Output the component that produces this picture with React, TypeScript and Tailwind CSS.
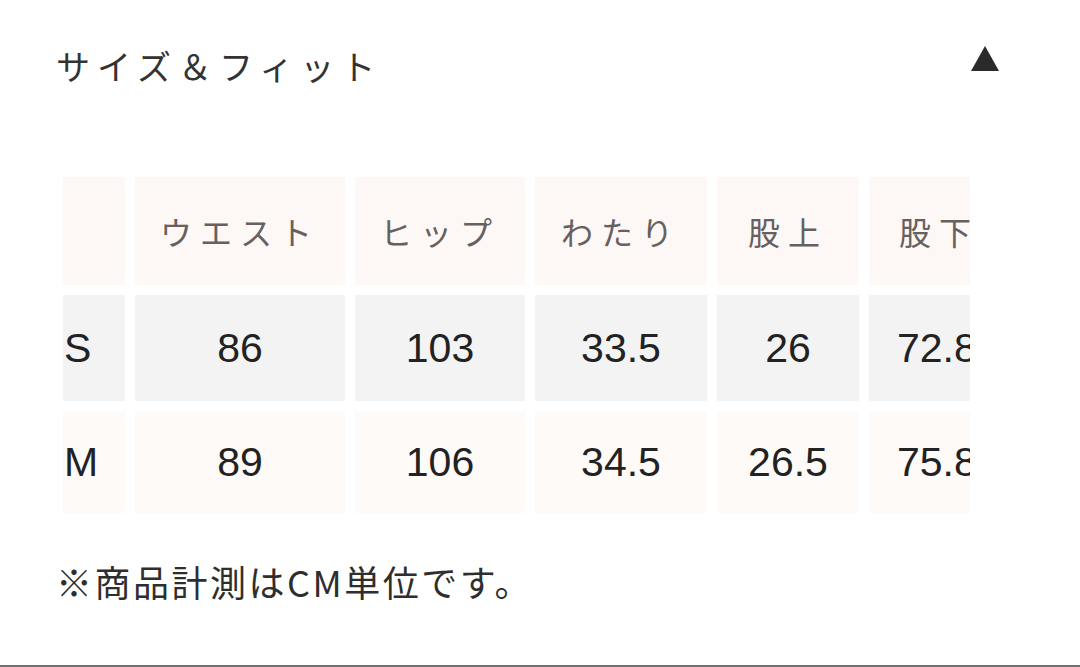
import React from "react";

const jp = { fontFamily: '"Noto Sans CJK JP", "Noto Sans", sans-serif' };
const num = { fontFamily: '"Liberation Sans", "Noto Sans CJK JP", sans-serif' };

const cols = ["w-[62px]", "w-[210px]", "w-[170px]", "w-[172px]", "w-[142px]", "w-[140px]"];

const headers = ["", "ウエスト", "ヒップ", "わたり", "股上", "股下"];
const rows = [
  ["S", "86", "103", "33.5", "26", "72.8"],
  ["M", "89", "106", "34.5", "26.5", "75.8"],
];

export default function App() {
  return (
    <div className="w-[1080px] h-[667px] bg-white flex flex-col overflow-hidden">
      <div className="flex items-center justify-between pl-[56px] pr-[80px] pt-[40px] h-[92px]">
        <div style={jp} className="text-[34px] font-normal leading-none text-[#333333] tracking-[7px]">
          サイズ＆フィット
        </div>
        <svg width="30" height="27" viewBox="0 0 30 27" className="mb-[16px]">
          <polygon points="15,1 29,26 1,26" fill="#2a2a2a" />
        </svg>
      </div>

      <div className="ml-[63px] mt-[85px] w-[907px] overflow-hidden flex flex-col gap-[10px]">
        <div className="flex gap-[10px] h-[108px]">
          {headers.map((h, i) => (
            <div
              key={i}
              className={`${cols[i]} shrink-0 bg-[#fdf8f6] flex items-center justify-center`}
            >
              <span style={jp} className="text-[32px] text-[#666060] tracking-[8px] leading-none">
                {h}
              </span>
            </div>
          ))}
        </div>
        {rows.map((r, ri) => (
          <div
            key={ri}
            className={`flex gap-[10px] ${ri === 0 ? "h-[106px]" : "h-[102px]"}`}
          >
            {r.map((v, i) => (
              <div
                key={i}
                className={`${cols[i]} shrink-0 ${ri === 0 ? "bg-[#f3f3f3]" : "bg-[#fefaf8]"} flex items-center ${
                  i === 0 ? "justify-start pl-[1px]" : i === 5 ? "justify-start pl-[28px]" : "justify-center"
                }`}
              >
                <span style={num} className="text-[41px] text-[#222222] leading-none">
                  {v}
                </span>
              </div>
            ))}
          </div>
        ))}
      </div>

      <div className="pl-[56px] mt-[50px]">
        <div style={jp} className="text-[36px] font-normal leading-none text-[#2e2e2e] tracking-[2.5px]">
          ※商品計測はCM単位です。
        </div>
      </div>

      <div className="flex-1" />
      <div className="h-[2px] bg-[#707070]" />
    </div>
  );
}
